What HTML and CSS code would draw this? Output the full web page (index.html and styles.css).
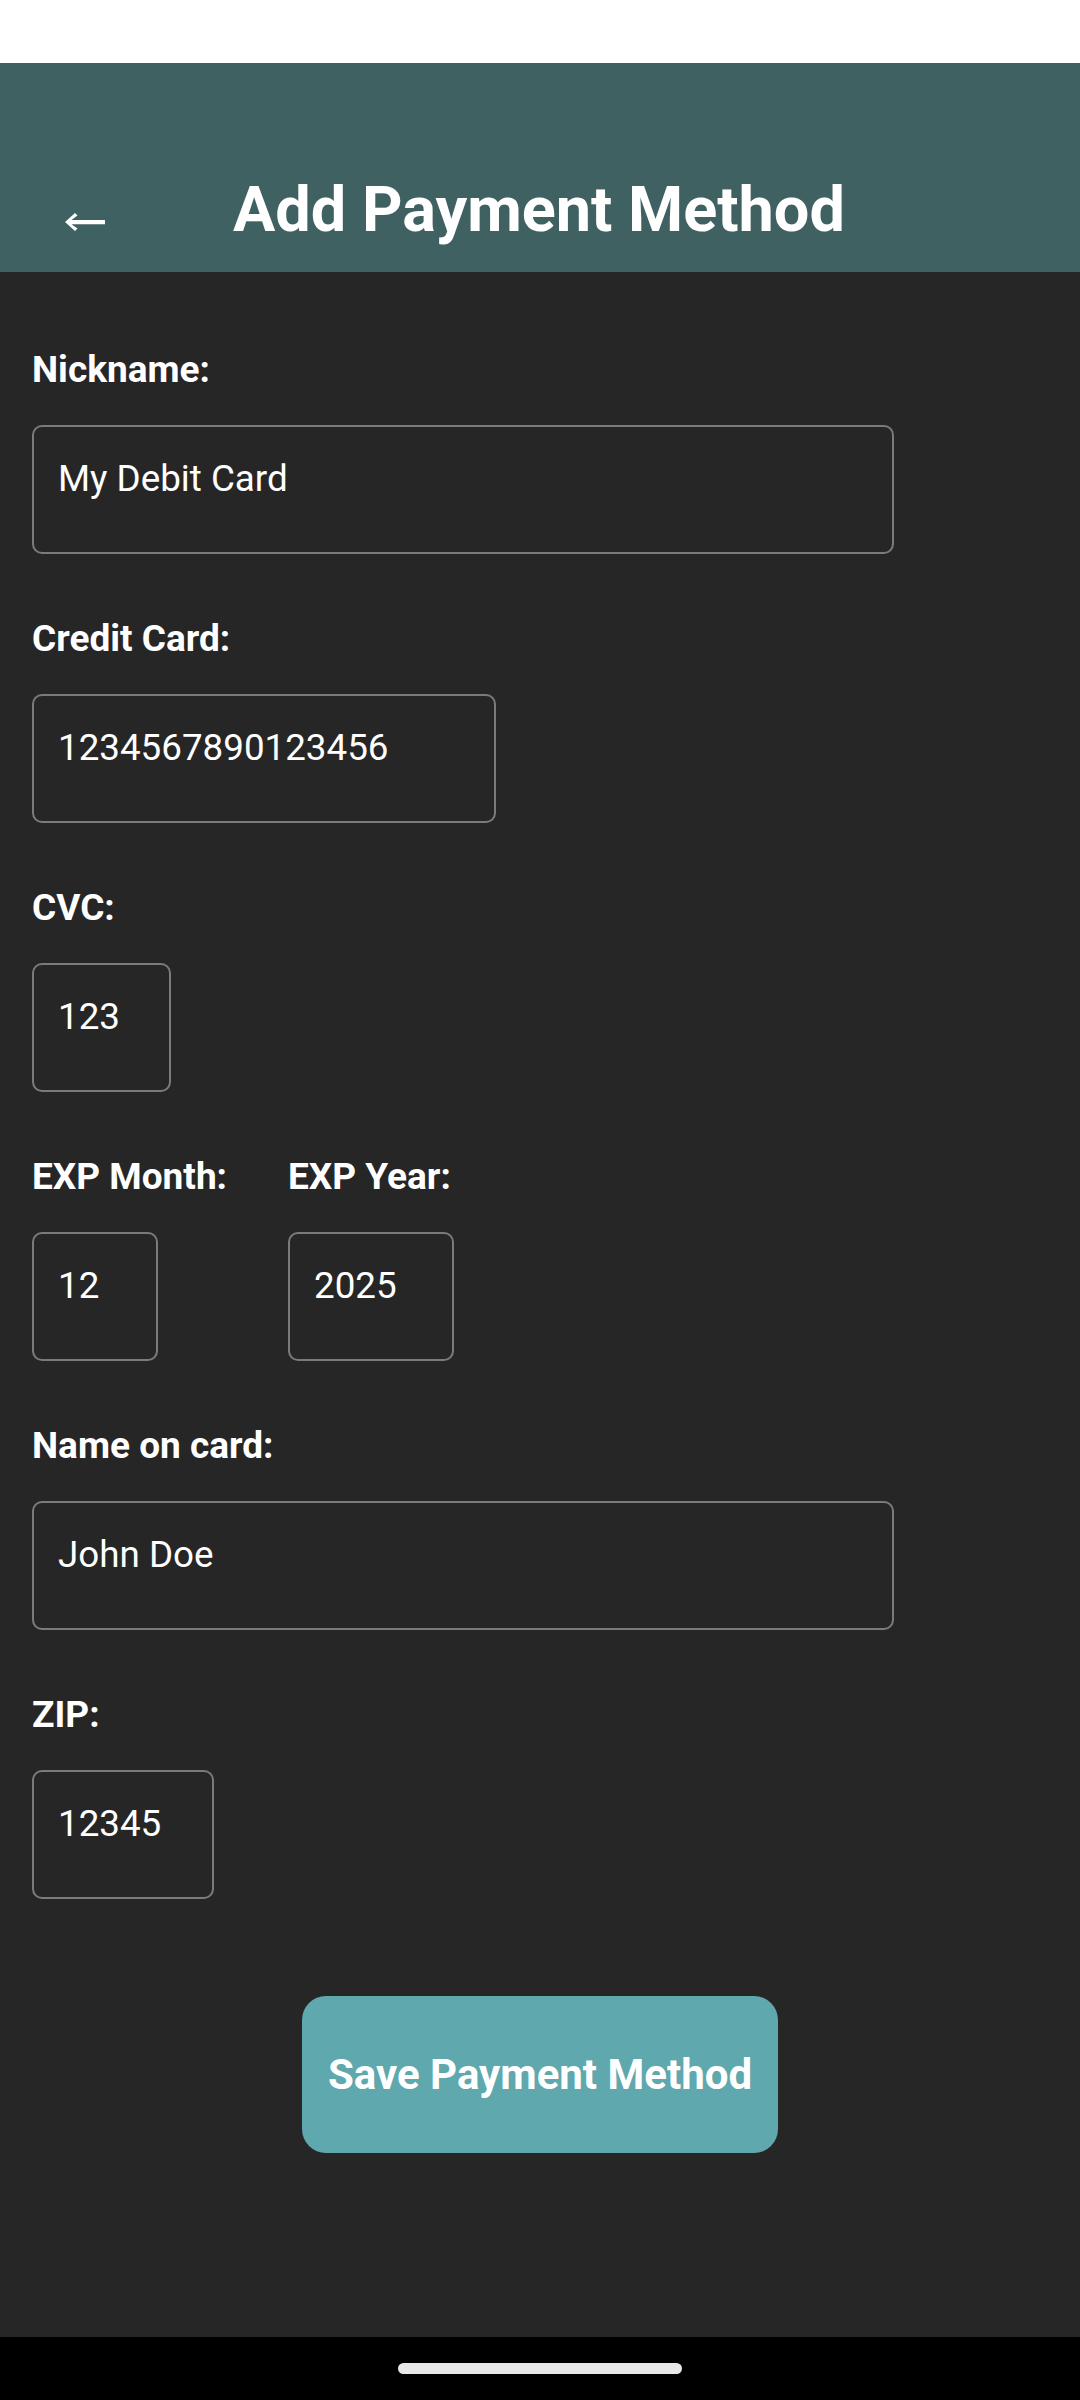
FILE: index.html
```html
<!DOCTYPE html>
<html lang="en">
<head>
<meta charset="utf-8">
<title>Add Payment Method</title>
<link rel="stylesheet" href="styles.css">
</head>
<body>
<div class="screen">
  <div class="status-bar"></div>
  <header class="header">
    <svg class="back" width="40" height="18" viewBox="0 0 40 18" aria-label="Back">
      <polygon points="0,9 10,0 12.5,2.5 6.5,7 40,7 40,11.2 6.5,11.2 12.5,15.5 10,18" fill="#ffffff"/>
    </svg>
    <h1 class="title">Add Payment Method</h1>
  </header>
  <main class="form">
    <div class="field">
      <div class="label">Nickname:</div>
      <div class="input w-full">My Debit Card</div>
    </div>
    <div class="field">
      <div class="label">Credit Card:</div>
      <div class="input w-card">1234567890123456</div>
    </div>
    <div class="field">
      <div class="label">CVC:</div>
      <div class="input w-cvc">123</div>
    </div>
    <div class="field-row">
      <div class="field col-month">
        <div class="label">EXP Month:</div>
        <div class="input w-month">12</div>
      </div>
      <div class="field">
        <div class="label">EXP Year:</div>
        <div class="input w-year">2025</div>
      </div>
    </div>
    <div class="field">
      <div class="label">Name on card:</div>
      <div class="input w-full">John Doe</div>
    </div>
    <div class="field">
      <div class="label">ZIP:</div>
      <div class="input w-zip">12345</div>
    </div>
    <div class="actions">
      <button class="save-btn" type="button">Save Payment Method</button>
    </div>
  </main>
  <div class="nav-bar"><div class="home-pill"></div></div>
</div>
</body>
</html>
```
FILE: styles.css
```css
* { box-sizing: border-box; }
html, body { margin: 0; padding: 0; }
body {
  background: #262626;
  font-family: Roboto, "Noto Sans", "Liberation Sans", sans-serif;
  color: #ffffff;
}
.screen {
  width: 1080px;
  height: 2400px;
  display: flex;
  flex-direction: column;
  background: #262626;
}
.status-bar {
  height: 63px;
  background: #ffffff;
  flex: none;
}
.header {
  height: 209px;
  flex: none;
  background: #406161;
  display: flex;
  align-items: flex-end;
  padding: 0 0 25px 65px;
}
.back {
  display: block;
  flex: none;
  margin-bottom: 16px;
  margin-right: 128px;
}
.title {
  margin: 0;
  font-size: 63px;
  line-height: 74px;
  font-weight: 700;
  color: #ffffff;
}
.form {
  flex: 1;
  padding: 76px 32px 0 32px;
}
.field {
  margin-bottom: 63px;
}
.field-row {
  display: flex;
}
.col-month {
  width: 256px;
  flex: none;
}
.label {
  font-size: 37px;
  line-height: 43px;
  font-weight: 700;
  margin-bottom: 34px;
}
.input {
  height: 129px;
  border: 2px solid #7b7b7b;
  border-radius: 10px;
  padding: 30px 24px 0 24px;
  font-size: 36.75px;
  line-height: 43px;
  font-weight: 400;
  color: #ffffff;
  white-space: nowrap;
  overflow: hidden;
}
.w-full { width: 862px; }
.w-card { width: 464px; }
.w-cvc { width: 139px; }
.w-month { width: 126px; }
.w-year { width: 166px; }
.w-zip { width: 182px; }
.actions {
  display: flex;
  justify-content: center;
  margin-top: 97px;
}
.save-btn {
  background: #5ea8ae;
  color: #ffffff;
  border: none;
  border-radius: 24px;
  padding: 54px 26px;
  font-family: Roboto, "Noto Sans", "Liberation Sans", sans-serif;
  font-size: 42px;
  line-height: 49px;
  font-weight: 700;
  cursor: pointer;
}
.nav-bar {
  height: 63px;
  flex: none;
  background: #000000;
  display: flex;
  justify-content: center;
  padding-top: 26px;
}
.home-pill {
  width: 284px;
  height: 11px;
  border-radius: 6px;
  background: #e8e8e8;
}
```
